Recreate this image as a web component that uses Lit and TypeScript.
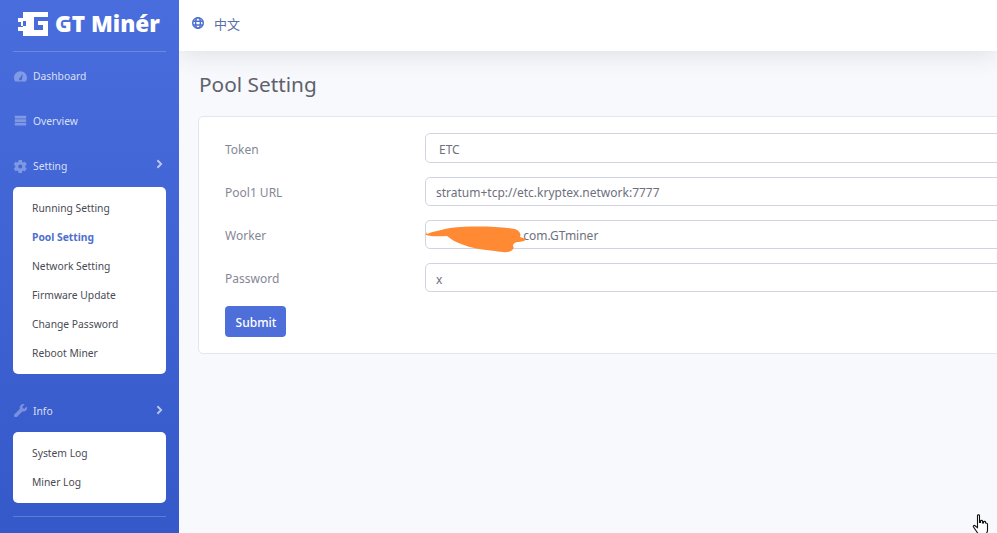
import { LitElement, html, css, svg } from "lit";
import { customElement } from "lit/decorators.js";

const icons = {
  gauge: svg`<path d="M8 1.500C3.600 1.500 0 5.100 0 9.500c0 1.500.4 2.800 1.100 4 .2.3.5.5.9.5h12c.4 0 .7-.2.9-.5.7-1.200 1.100-2.500 1.100-4 0-4.400-3.600-8-8-8zm1.600 10.500c-.3.6-.9 1-1.600 1-1 0-1.800-.8-1.800-1.800 0-.8.5-1.500 1.300-1.700l2.600-4 .8.3-1.100 4.600c.1.5 0 1.100-.2 1.600z"/>`,
  server: svg`<path d="M1 2h14v3.400H1zM1 6.400h14v3.400H1zM1 10.800h14v3.400H1z"/>`,
  gear: svg`<path d="M15.300 9.900l-1.400-.8c.1-.7.1-1.500 0-2.200l1.400-.8c.2-.1.2-.3.2-.5-.4-1.200-1-2.300-1.800-3.200-.1-.2-.4-.2-.5-.1l-1.400.8c-.6-.5-1.200-.8-1.900-1.100V.4c0-.2-.2-.4-.4-.4C8.300-.2 7-.2 5.900 0c-.2 0-.4.2-.4.4V2c-.7.3-1.300.6-1.900 1.100l-1.400-.8c-.2-.1-.4-.1-.5.1C.9 3.300.3 4.400-.1 5.600c-.1.2 0 .4.2.5l1.400.8c-.1.7-.1 1.500 0 2.200l-1.400.8c-.2.1-.2.3-.2.5.4 1.200 1 2.300 1.800 3.200.1.2.4.2.5.1l1.400-.8c.6.5 1.200.8 1.900 1.100v1.600c0 .2.2.4.4.4 1.100.2 2.400.2 3.500 0 .2 0 .4-.2.4-.4V14c.7-.3 1.300-.6 1.900-1.100l1.400.8c.2.1.4.1.5-.1.8-.9 1.400-2 1.800-3.200.1-.2 0-.4-.2-.5zM7.700 10.500a2.500 2.500 0 110-5 2.500 2.500 0 010 5z"/>`,
  wrench: svg`<path d="M15.800 3.600c-.1-.3-.4-.3-.6-.2l-2.300 2.300-2.100-.4-.4-2.100L12.700.9c.2-.2.1-.5-.2-.6-1.500-.4-3.100 0-4.300 1.200-1.200 1.200-1.500 3-1 4.500L.7 12.500c-.9.900-.9 2.300 0 3.100.9.900 2.300.9 3.100 0l6.500-6.500c1.500.5 3.300.2 4.500-1 1.200-1.200 1.600-2.900 1-4.500z"/>`,
};

const icon = (p: unknown) => html`<svg class="ico" viewBox="0 0 16 16" fill="currentColor">${p}</svg>`;
const chev = html`<svg class="chev" viewBox="0 0 8 12" fill="none" stroke="currentColor" stroke-width="2.200"><path d="M1.500 1.500 6 6l-4.500 4.500"/></svg>`;

@customElement("app-root")
export class AppRoot extends LitElement {
  static styles = css`
    :host { display: flex; width: 997px; height: 533px; overflow: hidden; background: #f8f9fc;
      font-family: "Noto Sans", "Noto Sans CJK SC", sans-serif; font-size: 12px; position: relative; }
    .side { width: 179px; flex: none; box-sizing: border-box; padding: 0 13px;
      background: linear-gradient(180deg, #496ddc 0%, #3659c9 100%); color: rgba(255,255,255,.8); }
    .brand { height: 52px; box-sizing: border-box; display: flex; align-items: center;
      gap: 6px; padding: 0 0 4px 5px; border-bottom: 1px solid rgba(255,255,255,.2); }
    .brand svg { width: 31px; height: 24px; flex: none; }
    .brand span { color: #fff; font-weight: 800; font-size: 22.600px; line-height: 24px; font-family: "Open Sans", sans-serif; white-space: nowrap; }
    .nav { display: flex; align-items: center; height: 45px; font-size: 10.300px; gap: 6px; padding-left: 1px; box-sizing: border-box; }
    .nav .ico { width: 13px; height: 13px; color: rgba(255,255,255,.32); flex: none; }
    .nav span { flex: 1; }
    .chev { width: 7px; height: 10px; color: rgba(255,255,255,.65); margin: 0 3px 2px 0; }
    .first { height: 48px; }
    .over { height: 41px; }
    .menu { background: #fff; border-radius: 5px; padding: 7px 0 6px 19px; margin-bottom: 14px; }
    .menu.compact { margin-bottom: 13px; }
    .menu div { height: 29px; line-height: 29px; font-size: 10.300px; color: #4a4b55; white-space: nowrap; }
    .menu div.on { color: #4e6fd0; font-weight: 700; }
    .nav.setting { height: 46px; padding-top: 4px; }
    .nav.setting .chev { margin-bottom: 4px; }
    .nav.info { height: 44px; padding-top: 1px; }
    .rule { border-top: 1px solid rgba(255,255,255,.2); }
    .main { flex: 1; min-width: 0; overflow: hidden; }
    .top { height: 51px; background: #fff; box-shadow: 0 4px 24px rgba(58,59,69,.13); display: flex; align-items: center;
      padding: 0 0 5px 13px; gap: 10px; color: #5a6fa8; font-size: 13px; box-sizing: border-box; position: relative; }
    .top svg { width: 12px; height: 12px; color: #4e6fd0; }
    h1 { margin: 0; padding: 19px 0 0 20px; font-weight: 400; font-size: 20.800px; line-height: 28px; color: #5f616d; height: 65px; box-sizing: border-box; }
    .card { margin-left: 19px; width: 900px; height: 238px; box-sizing: border-box; background: #fff; border: 1px solid #e3e6f0;
      border-radius: 5px; padding: 16px 26px 0; }
    .row { display: flex; align-items: center; height: 29px; margin-bottom: 14px; color: #858796; font-size: 12px; }
    .row:first-child { height: 30px; }
    .row label { width: 200px; flex: none; padding-top: 2px; }
    .field { position: relative; flex: 1; height: 100%; box-sizing: border-box; border: 1px solid #d1d3e2; border-radius: 5px;
      padding: 2px 10px 0; display: flex; align-items: center; color: #6e707e; font-size: 12px; }
    .field.pad { padding-left: 13px; }
    .field.low { padding-top: 4px; }
    .gap { display: inline-block; width: 84px; }
    .blot { position: absolute; left: 0; top: -6px; width: 105px; height: 40px; }
    .btn { display: block; width: 61px; height: 31px; border: none; border-radius: 4px; background: #4e6fd9; color: #fff;
      font: 500 12px "Noto Sans", sans-serif; padding: 1px 0 0 1px; }
    .cursor { position: absolute; left: 972px; top: 514px; width: 18px; height: 20px; }
  `;

  render() {
    const setting = ["Running Setting", "Pool Setting", "Network Setting", "Firmware Update", "Change Password", "Reboot Miner"];
    return html`
      <aside class="side">
        <div class="brand">
          <svg viewBox="0 0 31 24" fill="#fff" fill-rule="evenodd">
            <path d="M5 0H30V24H5V19H0V15H5V9H8V14H3V10H0V6H5zM16 5V18H25V13H20V9H30V5z"/>
          </svg>
          <span>GT Minér</span>
        </div>
        <div class="nav first">${icon(icons.gauge)}<span>Dashboard</span></div>
        <div class="nav over">${icon(icons.server)}<span>Overview</span></div>
        <div class="nav setting">${icon(icons.gear)}<span>Setting</span>${chev}</div>
        <div class="menu">
          ${setting.map((s) => html`<div class=${s === "Pool Setting" ? "on" : ""}>${s}</div>`)}
        </div>
        <div class="nav info">${icon(icons.wrench)}<span>Info</span>${chev}</div>
        <div class="menu compact">
          <div>System Log</div>
          <div>Miner Log</div>
        </div>
        <div class="rule"></div>
      </aside>
      <main class="main">
        <header class="top">
          <svg viewBox="0 0 16 16" fill="none" stroke="currentColor" stroke-width="2">
            <circle cx="8" cy="8" r="7"/><ellipse cx="8" cy="8" rx="3.200" ry="7"/><path d="M1 5.500h14M1 10.500h14"/>
          </svg>
          <span>中文</span>
        </header>
        <h1>Pool Setting</h1>
        <section class="card">
          <div class="row"><label>Token</label><div class="field pad">ETC</div></div>
          <div class="row"><label>Pool1 URL</label><div class="field">stratum+tcp://etc.kryptex.network:7777</div></div>
          <div class="row"><label>Worker</label><div class="field">
            <span class="gap"></span>.com.GTminer
            <svg class="blot" viewBox="0 0 105 40" fill="#ff8a33">
              <path d="M1 19C8 16 16 15 24 13c20-2 45-2 65 1 5 2 6 5 5 8l6 2c0 2-5 3-9 3-3 1-4 2-4 4 1 1 1 3-2 5-4 2-10 1-16 0-12-1-24-3-34-7-6-2-10-5-14-8-7 0-15 1-21-1-1-1-1-2 0-3z"/>
            </svg>
          </div></div>
          <div class="row"><label>Password</label><div class="field low">x</div></div>
          <button class="btn">Submit</button>
        </section>
      </main>
      <svg class="cursor" viewBox="0 0 18 20" fill="#fff" stroke="#111" stroke-width="1.100">
        <path d="M5.500 1.500c0-1 2-1 2 0v7h1V7c0-1 2-1 2 0v2h1V8c0-1 2-1 2 0v1h.7c.8 0 1.300.5 1.300 1.300V17l-1 2.500H6L1.500 13c-.6-1 .6-2 1.500-1.300l2.500 2z"/>
      </svg>
    `;
  }
}
